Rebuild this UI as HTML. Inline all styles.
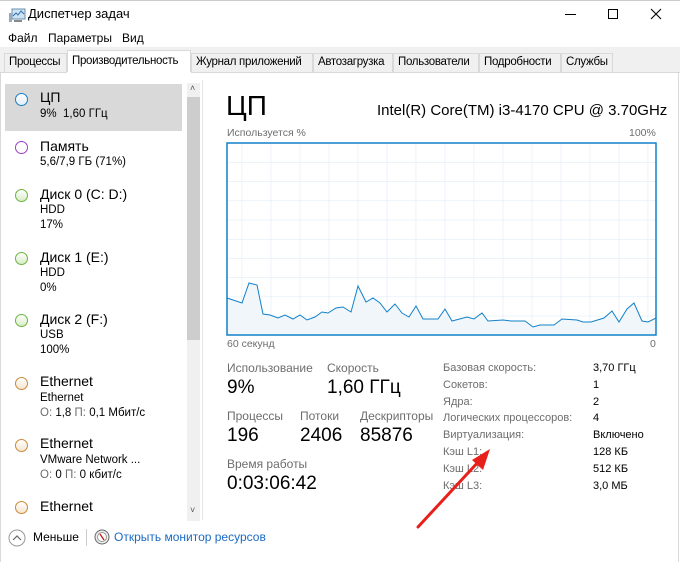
<!DOCTYPE html>
<html><head><meta charset="utf-8"><style>
*{margin:0;padding:0;box-sizing:border-box}
body{width:680px;height:562px;background:#fff;font-family:"Segoe UI","Liberation Sans","DejaVu Sans",sans-serif;color:#000;position:relative;overflow:hidden;font-size:12px}
.a{position:absolute;white-space:nowrap}
.g{color:#6d6d6d}
.tab{position:absolute;top:53px;height:19px;border:1px solid #d9d9d9;border-bottom:none;background:#f0f0f0;font-size:11.5px;letter-spacing:-0.3px;padding:2px 0 0 4px;white-space:nowrap;overflow:hidden}
.side .t{font-size:14px}
.side .s{font-size:11.5px}
.dot{position:absolute;width:13px;height:13px;border-radius:50%;border:1.5px solid}
</style></head><body>
<div class="a" style="left:0;top:0;width:680px;height:1px;background:#ccc"></div>
<svg class="a" style="left:8px;top:8px" width="18" height="16"><rect x="4" y="1" width="13" height="10" fill="#cfe3f3" stroke="#6a8fb0"/><polyline points="5,8 8,5 10,7 13,3 16,6" fill="none" stroke="#2b6fb0"/><rect x="1" y="5" width="3" height="9" fill="#9ab"/><rect x="6" y="12" width="8" height="2" fill="#888"/></svg>
<div class="a" style="left:28px;top:6px;font-size:13px">Диспетчер задач</div>
<div class="a" style="left:565px;top:14px;width:11px;height:1px;background:#000"></div>
<div class="a" style="left:608px;top:9px;width:10px;height:10px;border:1px solid #000"></div>
<svg class="a" style="left:650px;top:8px" width="12" height="12"><path d="M1 1L11 11M11 1L1 11" stroke="#000" stroke-width="1.1"/></svg>
<div class="a" style="left:8px;top:31px;font-size:12px">Файл</div>
<div class="a" style="left:48px;top:31px;font-size:12px">Параметры</div>
<div class="a" style="left:122px;top:31px;font-size:12px">Вид</div>
<div class="a" style="left:0;top:47px;width:680px;height:25px;background:#f0f0f0"></div>
<div class="tab" style="left:4px;width:63px">Процессы</div>
<div class="tab" style="left:67px;top:50px;height:23px;width:124px;background:#fff;padding-top:4px">Производительность</div>
<div class="tab" style="left:191px;width:122px">Журнал приложений</div>
<div class="tab" style="left:313px;width:80px">Автозагрузка</div>
<div class="tab" style="left:393px;width:86px">Пользователи</div>
<div class="tab" style="left:479px;width:82px">Подробности</div>
<div class="tab" style="left:561px;width:52px">Службы</div>
<div class="a" style="left:0;top:72px;width:680px;height:1px;background:#d9d9d9"></div>
<div class="a" style="left:67px;top:72px;width:124px;height:1px;background:#fff"></div>
<div class="a" style="left:0;top:72px;width:1px;height:490px;background:#d9d9d9"></div>
<div class="a" style="left:678px;top:72px;width:1px;height:490px;background:#d9d9d9"></div>
<div class="a" style="left:202px;top:80px;width:1px;height:440px;background:#e6e6e6"></div>
<!-- sidebar -->
<div class="a" style="left:5px;top:84px;width:177px;height:47px;background:#d9d9d9"></div>
<div class="a" style="left:187px;top:83px;width:13px;height:438px;background:#f0f0f0"></div>
<div class="a" style="left:187px;top:97px;width:13px;height:243px;background:#cdcdcd"></div>
<div class="a" style="left:190px;top:83px;font-size:9px;color:#555">˄</div>
<div class="a" style="left:190px;top:505px;font-size:9px;color:#555">˅</div>
<div class="side">
<div class="dot" style="left:15px;top:93px;border-color:#1a7fc6;background:linear-gradient(#fff,#e4eef8)"></div>
<div class="a t" style="left:40px;top:89px">ЦП</div><div class="a s" style="left:40px;top:108px">9%&nbsp; 1,60 ГГц</div>
<div class="dot" style="left:15px;top:141px;border-color:#9a3fc7;background:#fff"></div>
<div class="a t" style="left:40px;top:138px">Память</div><div class="a s" style="left:40px;top:156px">5,6/7,9 ГБ (71%)</div>
<div class="dot" style="left:15px;top:189px;border-color:#6cb33f;background:linear-gradient(#fff,#d7ecc8)"></div>
<div class="a t" style="left:40px;top:186px">Диск 0 (C: D:)</div><div class="a s" style="left:40px;top:204px">HDD</div><div class="a s" style="left:40px;top:219px">17%</div>
<div class="dot" style="left:15px;top:252px;border-color:#6cb33f;background:linear-gradient(#fff,#d7ecc8)"></div>
<div class="a t" style="left:40px;top:249px">Диск 1 (E:)</div><div class="a s" style="left:40px;top:267px">HDD</div><div class="a s" style="left:40px;top:282px">0%</div>
<div class="dot" style="left:15px;top:314px;border-color:#6cb33f;background:linear-gradient(#fff,#d7ecc8)"></div>
<div class="a t" style="left:40px;top:311px">Диск 2 (F:)</div><div class="a s" style="left:40px;top:329px">USB</div><div class="a s" style="left:40px;top:344px">100%</div>
<div class="dot" style="left:15px;top:377px;border-color:#c98a3a;background:linear-gradient(#fff,#f5e6d0)"></div>
<div class="a t" style="left:40px;top:373px">Ethernet</div><div class="a s" style="left:40px;top:392px">Ethernet</div><div class="a s" style="left:40px;top:407px"><span class="g">О:</span> 1,8 <span class="g">П:</span> 0,1 Мбит/с</div>
<div class="dot" style="left:15px;top:439px;border-color:#c98a3a;background:linear-gradient(#fff,#f5e6d0)"></div>
<div class="a t" style="left:40px;top:435px">Ethernet</div><div class="a s" style="left:40px;top:454px">VMware Network ...</div><div class="a s" style="left:40px;top:469px"><span class="g">О:</span> 0 <span class="g">П:</span> 0 кбит/с</div>
<div class="dot" style="left:15px;top:501px;border-color:#c98a3a;background:linear-gradient(#fff,#f5e6d0)"></div>
<div class="a t" style="left:40px;top:498px">Ethernet</div>
</div>
<div class="a" style="left:1px;top:521px;width:677px;height:41px;background:#fff"></div>
<!-- footer -->
<svg class="a" style="left:8px;top:529px" width="18" height="18"><circle cx="9" cy="9" r="8" fill="#fff" stroke="#999"/><path d="M5 11L9 7L13 11" fill="none" stroke="#666" stroke-width="1.2"/></svg>
<div class="a" style="left:33px;top:530px;font-size:12px">Меньше</div>
<div class="a" style="left:86px;top:529px;width:1px;height:17px;background:#ccc"></div>
<svg class="a" style="left:94px;top:529px" width="16" height="16"><circle cx="8" cy="8" r="7" fill="#eee" stroke="#666"/><circle cx="8" cy="8" r="4.5" fill="#fff" stroke="#999"/><path d="M6 5L10 11" stroke="#c22" stroke-width="1.4"/></svg>
<div class="a" style="left:114px;top:530px;font-size:12px;color:#1a6ac4">Открыть монитор ресурсов</div>
<!-- main -->
<div class="a" style="left:226px;top:88px;font-size:28px;line-height:36px">ЦП</div>
<div class="a" style="left:377px;top:102px;font-size:15px">Intel(R) Core(TM) i3-4170 CPU @ 3.70GHz</div>
<div class="a g" style="left:227px;top:127px;font-size:10.5px">Используется %</div>
<div class="a g" style="left:629px;top:127px;font-size:10.5px">100%</div>
<svg class="a" style="left:226px;top:142px" width="431" height="195">
<defs><pattern id="p" x="15.7" y="1" width="29" height="19.2" patternUnits="userSpaceOnUse"><path d="M0 0V19.2M0 0H29" fill="none" stroke="#d9eaf7" stroke-width="1"/></pattern></defs>
<rect x="1" y="1" width="429" height="192" fill="url(#p)"/>
<polygon fill="#f1f6fb" stroke="#1181c8" stroke-width="1" points="1,193 1,156 16,161 23,141 31,143 37,172 44,173 52,176 59,173 67,177 74,173 81,178 89,175 96,170 102,171 110,166 117,165 125,170 132,144 140,160 147,156 154,161 161,170 169,162 176,171 183,175 190,164 197,177 212,177 219,167 226,179 241,175 248,177 256,171 262,179 277,178 285,179 299,179 307,185 314,183 328,183 336,177 351,178 357,180 365,180 378,176 386,169 393,180 401,167 408,161 416,179 422,180 430,176 430,193"/>
<rect x="1" y="1" width="429" height="192" fill="none" stroke="#1181c8" stroke-width="1.5"/>
</svg>
<div class="a g" style="left:227px;top:338px;font-size:10.5px">60 секунд</div>
<div class="a g" style="left:650px;top:338px;font-size:10.5px">0</div>
<div class="a g" style="left:227px;top:361px;font-size:12px">Использование</div>
<div class="a g" style="left:327px;top:361px;font-size:12px">Скорость</div>
<div class="a" style="left:227px;top:377px;font-size:19px">9%</div>
<div class="a" style="left:327px;top:377px;font-size:19px">1,60 ГГц</div>
<div class="a g" style="left:227px;top:409px;font-size:12px">Процессы</div>
<div class="a g" style="left:300px;top:409px;font-size:12px">Потоки</div>
<div class="a g" style="left:360px;top:409px;font-size:12px">Дескрипторы</div>
<div class="a" style="left:227px;top:425px;font-size:19px">196</div>
<div class="a" style="left:300px;top:425px;font-size:19px">2406</div>
<div class="a" style="left:360px;top:425px;font-size:19px">85876</div>
<div class="a g" style="left:227px;top:457px;font-size:12px">Время работы</div>
<div class="a" style="left:227px;top:473px;font-size:19px">0:03:06:42</div>
<div class="a g" style="left:443px;top:360px;font-size:11px;line-height:16.8px">Базовая скорость:<br>Сокетов:<br>Ядра:<br>Логических процессоров:<br>Виртуализация:<br>Кэш L1:<br>Кэш L2:<br>Кэш L3:</div>
<div class="a" style="left:593px;top:360px;font-size:11px;line-height:16.8px">3,70 ГГц<br>1<br>2<br>4<br>Включено<br>128 КБ<br>512 КБ<br>3,0 МБ</div>
<svg class="a" style="left:410px;top:440px" width="90" height="100"><path d="M8 87L70 20" stroke="#e8201c" stroke-width="3" stroke-linecap="round"/><polygon points="80,9 62,20 73,30" fill="#e8201c"/></svg>
</body></html>
